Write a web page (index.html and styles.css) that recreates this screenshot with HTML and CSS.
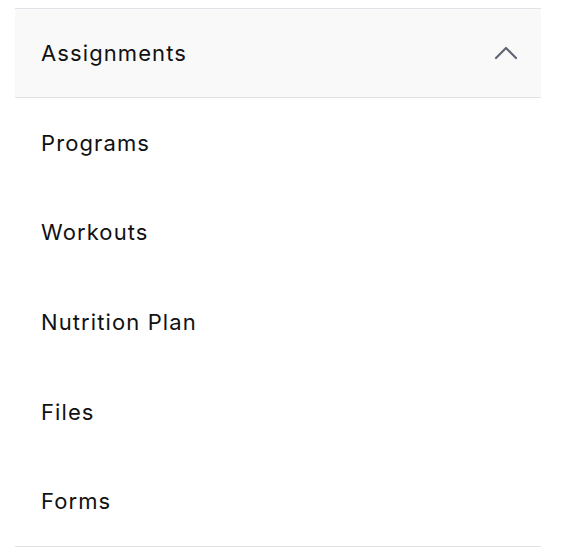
FILE: index.html
```html
<!DOCTYPE html>
<html>
<head>
<meta charset="utf-8">
<link rel="stylesheet" href="styles.css">
</head>
<body>
<div class="accordion">
  <div class="acc-header">
    <span class="acc-title">Assignments</span>
    <svg class="chevron" width="24" height="14" viewBox="0 0 24 14" fill="none">
      <path d="M2 12 L12 2 L22 12" stroke="#5f6673" stroke-width="2.2" stroke-linecap="round" stroke-linejoin="round"/>
    </svg>
  </div>
  <ul class="acc-list">
    <li class="acc-item">Programs</li>
    <li class="acc-item">Workouts</li>
    <li class="acc-item">Nutrition Plan</li>
    <li class="acc-item">Files</li>
    <li class="acc-item">Forms</li>
  </ul>
</div>
</body>
</html>
```
FILE: styles.css
```css
html, body {
  margin: 0;
  padding: 0;
  background: #ffffff;
}
body {
  font-family: "Inter", "Open Sans", sans-serif;
  color: #111111;
}
.accordion {
  margin: 8px 25px 0 15px;
  width: 526px;
  border-top: 1px solid #dfe2e7;
  border-bottom: 1px solid #dfe2e7;
}
.acc-header {
  height: 89px;
  background: #f9f9f9;
  border-bottom: 1px solid #dfe2e7;
  display: flex;
  align-items: center;
  justify-content: space-between;
  padding: 0 23px 0 26px;
  box-sizing: border-box;
}
.acc-title {
  font-size: 22px;
  letter-spacing: 1.1px;
}
.chevron {
  display: block;
}
.acc-list {
  list-style: none;
  margin: 0;
  padding: 0;
}
.acc-item {
  height: 89.6px;
  display: flex;
  align-items: center;
  padding-left: 26px;
  font-size: 22px;
  letter-spacing: 1.1px;
}
```
